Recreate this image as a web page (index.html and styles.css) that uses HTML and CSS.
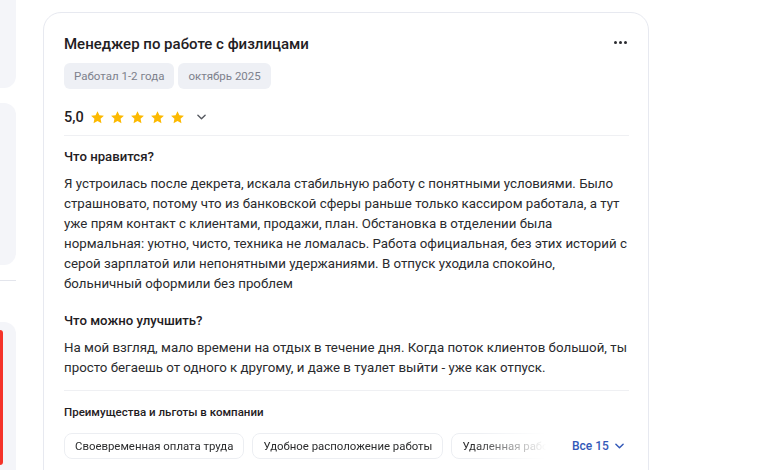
FILE: index.html
```html
<!DOCTYPE html>
<html lang="ru">
<head>
<meta charset="utf-8">
<link rel="stylesheet" href="styles.css">
</head>
<body>
<div class="page">
  <aside class="side">
    <div class="panel panel-1"></div>
    <div class="panel panel-2"></div>
    <div class="side-line"></div>
    <div class="panel panel-3"><div class="red-mark"></div></div>
  </aside>
  <article class="card">
    <header class="card-head">
      <h1 class="title">Менеджер по работе с физлицами</h1>
      <button class="more" aria-label="Ещё"><span></span><span></span><span></span></button>
    </header>
    <div class="tags">
      <span class="tag">Работал 1-2 года</span>
      <span class="tag">октябрь 2025</span>
    </div>
    <div class="rating">
      <span class="score">5,0</span>
      <span class="stars">
        <svg viewBox="0 0 24 24"><path d="M12 1.8l3.05 6.6 7.2.85-5.33 4.920 1.42 7.12L12 17.7l-6.34 3.59 1.42-7.12L1.75 9.25l7.2-.85z"/></svg>
        <svg viewBox="0 0 24 24"><path d="M12 1.8l3.05 6.6 7.2.85-5.33 4.92 1.42 7.12L12 17.7l-6.34 3.59 1.42-7.12L1.75 9.25l7.2-.85z"/></svg>
        <svg viewBox="0 0 24 24"><path d="M12 1.8l3.05 6.6 7.2.85-5.33 4.92 1.42 7.12L12 17.7l-6.34 3.59 1.42-7.12L1.75 9.25l7.2-.85z"/></svg>
        <svg viewBox="0 0 24 24"><path d="M12 1.8l3.05 6.6 7.2.85-5.33 4.92 1.42 7.12L12 17.7l-6.34 3.59 1.42-7.12L1.75 9.25l7.2-.85z"/></svg>
        <svg viewBox="0 0 24 24"><path d="M12 1.8l3.05 6.6 7.2.85-5.33 4.92 1.42 7.12L12 17.7l-6.34 3.59 1.42-7.12L1.75 9.25l7.2-.85z"/></svg>
      </span>
      <svg class="chev" viewBox="0 0 10 6"><path d="M1 1l4 4 4-4" fill="none" stroke="currentColor" stroke-width="1.5" stroke-linecap="round" stroke-linejoin="round"/></svg>
    </div>
    <section class="block block-first">
      <h2 class="block-title">Что нравится?</h2>
      <p class="block-text">Я устроилась после декрета, искала стабильную работу с понятными условиями. Было страшновато, потому что из банковской сферы раньше только кассиром работала, а тут уже прям контакт с клиентами, продажи, план. Обстановка в отделении была нормальная: уютно, чисто, техника не ломалась. Работа официальная, без этих историй с серой зарплатой или непонятными удержаниями. В отпуск уходила спокойно, больничный оформили без проблем</p>
    </section>
    <section class="block">
      <h2 class="block-title">Что можно улучшить?</h2>
      <p class="block-text">На мой взгляд, мало времени на отдых в течение дня. Когда поток клиентов большой, ты просто бегаешь от одного к другому, и даже в туалет выйти - уже как отпуск.</p>
    </section>
    <section class="perks">
      <h3 class="perks-title">Преимущества и льготы в компании</h3>
      <div class="perks-row">
        <div class="perks-list">
          <span class="perk">Своевременная оплата труда</span>
          <span class="perk">Удобное расположение работы</span>
          <span class="perk">Удаленная работа</span>
        </div>
        <button class="all">Все 15
          <svg viewBox="0 0 10 6"><path d="M1 1l4 4 4-4" fill="none" stroke="currentColor" stroke-width="1.6" stroke-linecap="round" stroke-linejoin="round"/></svg>
        </button>
      </div>
    </section>
  </article>
</div>
</body>
</html>
```

FILE: styles.css
```css
* { box-sizing: border-box; }
html, body {
  margin: 0;
  padding: 0;
  background: #fff;
  height: 470px;
  overflow: hidden;
}
body {
  font-family: Roboto, "Noto Sans", "Liberation Sans", sans-serif;
  color: #2c2d2e;
}
.page {
  display: flex;
  gap: 27px;
  align-items: flex-start;
}
.side {
  width: 16px;
  flex: none;
  display: flex;
  flex-direction: column;
}
.panel {
  background: #f4f5f9;
}
.panel-1 {
  height: 88px;
  border-radius: 0 0 12px 0;
}
.panel-2 {
  margin-top: 15px;
  height: 162px;
  border-radius: 0 12px 12px 0;
}
.side-line {
  margin-top: 15px;
  height: 1px;
  background: #e3e5ec;
}
.panel-3 {
  margin-top: 41px;
  height: 200px;
  border-radius: 0 12px 0 0;
  padding-top: 8px;
}
.red-mark {
  width: 3px;
  height: 135px;
  background: #f5332a;
  border-radius: 0 3px 3px 0;
}
.card {
  margin-top: 12px;
  width: 606px;
  height: 520px;
  flex: none;
  border: 1px solid #e7e9f0;
  border-radius: 18px;
  padding: 20px 19px 20px 20px;
  background: #fff;
}
.card-head {
  display: flex;
  align-items: center;
  justify-content: space-between;
  height: 22px;
}
.title {
  margin: 0;
  font-size: 15px;
  line-height: 22px;
  font-weight: 500;
  color: #1f2023;
}
.more {
  border: 0;
  background: none;
  padding: 0;
  margin-right: 2px;
  display: flex;
  gap: 2px;
  margin-top: -4px;
}
.more span {
  width: 3px;
  height: 3px;
  border-radius: 50%;
  background: #2a2b30;
}
.tags {
  margin-top: 8px;
  display: flex;
  gap: 4px;
}
.tag {
  height: 26px;
  line-height: 26px;
  padding: 0 10px;
  border-radius: 6px;
  background: #eef0f5;
  color: #7d818c;
  font-size: 11.5px;
}
.rating {
  margin-top: 16px;
  display: flex;
  align-items: center;
  height: 24px;
}
.score {
  font-size: 14.5px;
  font-weight: 500;
  color: #1f2023;
}
.stars {
  display: flex;
  gap: 5px;
  margin-left: 6px;
}
.stars svg {
  width: 15px;
  height: 15px;
  fill: #fcb900;
}
.chev {
  width: 9px;
  height: 6px;
  margin-left: 12px;
  color: #55585f;
}
.block {
  margin-top: 17px;
}
.block-first {
  margin-top: 6px;
  padding-top: 11px;
  border-top: 1px solid #eff0f3;
}
.block-title {
  margin: 0;
  font-size: 13.2px;
  line-height: 20px;
  font-weight: 500;
  color: #1f2023;
}
.block-text {
  margin: 7px 0 0;
  font-size: 13.3px;
  line-height: 20px;
  color: #2a2b2e;
}
.perks {
  margin-top: 12px;
  border-top: 1px solid #eff0f3;
  padding-top: 11px;
}
.perks-title {
  margin: 0;
  font-size: 11.5px;
  line-height: 20px;
  font-weight: 500;
  color: #1f2023;
}
.perks-row {
  margin-top: 11px;
  display: flex;
  align-items: center;
}
.perks-list {
  width: 487px;
  flex: none;
  display: flex;
  gap: 8px;
  overflow: hidden;
  white-space: nowrap;
  -webkit-mask-image: linear-gradient(to right, #000 84%, transparent 99%);
  mask-image: linear-gradient(to right, #000 84%, transparent 99%);
}
.perk {
  flex: none;
  height: 26px;
  line-height: 24px;
  padding: 0 10px;
  border: 1px solid #eceef2;
  border-radius: 8px;
  font-size: 11.4px;
  color: #2c2d2e;
}
.all {
  flex: none;
  white-space: nowrap;
  margin-left: 21px;
  border: 0;
  background: none;
  padding: 0;
  font-family: inherit;
  font-size: 12px;
  font-weight: 500;
  color: #3359b8;
  display: flex;
  align-items: center;
  gap: 6px;
}
.all svg {
  width: 9px;
  height: 6px;
}
```
